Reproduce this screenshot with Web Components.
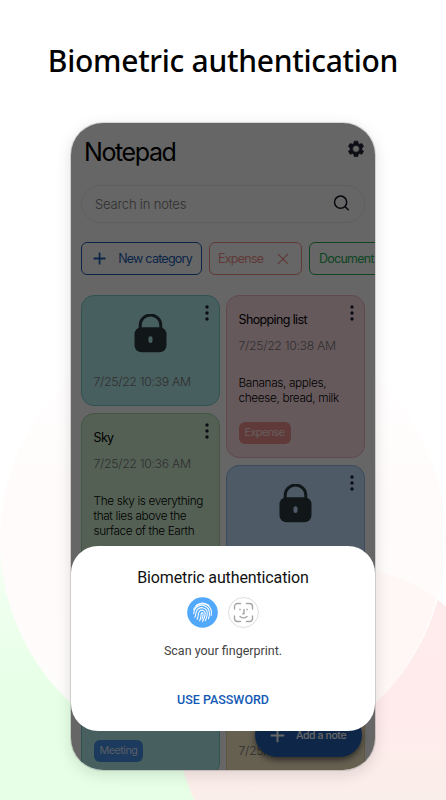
<!DOCTYPE html>
<html lang="en">
<head>
<meta charset="utf-8">
<title>Notepad</title>
<style>
	html,body{margin:0;width:446px;height:800px;overflow:hidden;background:#fff}
</style>
</head>
<body>
<promo-page headline="Biometric authentication">
	<phone-frame>
		<notes-header>Notepad</notes-header>
		<search-field>Search in notes</search-field>
		<category-bar>
			<category-chip icon="plus" style="--color:#1c5eb4">New category</category-chip>
			<category-chip icon="close" style="--color:#f08f8b">Expense</category-chip>
			<category-chip style="--color:#28ad55">Document</category-chip>
		</category-bar>
		<note-board>
			<note-card slot="left" locked date="7/25/22 10:39 AM" style="--fill:#b4eded;--edge:#78cdcb;--h:111px"></note-card>
			<note-card slot="left" name="Sky" date="7/25/22 10:36 AM" style="--fill:#d1f0d3;--edge:#a2d6a9;--h:218px">The sky is everything that lies above the surface of the Earth</note-card>
			<note-card slot="left" locked date="7/25/22 10:33 AM" tag="Meeting" style="--fill:#b4eded;--edge:#78cdcb;--tag:#4690ea;--h:138px"></note-card>
			<note-card slot="right" name="Shopping list" date="7/25/22 10:38 AM" tag="Expense" style="--fill:#ffdfe7;--edge:#f0b6c3;--tag:#f0918d;--h:163px">Bananas, apples, cheese, bread, milk</note-card>
			<note-card slot="right" locked date="7/25/22 10:35 AM" style="--fill:#c4e0ff;--edge:#93bdec;--h:192px"></note-card>
			<note-card slot="right" locked date="7/25/22 10:31 AM" style="--fill:#fff0cb;--edge:#eed9a5;--h:140px"></note-card>
		</note-board>
		<add-button slot="over">Add a note</add-button>
		<auth-dialog slot="dialog" heading="Biometric authentication" action="USE PASSWORD">Scan your fingerprint.</auth-dialog>
	</phone-frame>
</promo-page>
<script>
class UIElement extends HTMLElement {
	constructor(){
		super()
		const root = this.attachShadow({mode:"open"})
		root.innerHTML = `<style>*{box-sizing:border-box}:host{display:block;box-sizing:border-box}${this.constructor.css}</style>${this.html()}`
	}
	attr(name){
		return this.getAttribute(name)||""
	}
	html(){
		return "<slot></slot>"
	}
}
const ICONS = {
	plus:`<svg width="15" height="15" viewBox="0 0 15 15"><path d="M7.5 .7v13.6M.7 7.5h13.6" fill="none" stroke="currentColor" stroke-width="2"/></svg>`,
	close:`<svg width="12" height="12" viewBox="0 0 12 12"><path d="M.8.8l10.4 10.4M11.2.8L.8 11.2" fill="none" stroke="currentColor" stroke-width="1.2"/></svg>`,
	search:`<svg width="17" height="17" viewBox="0 0 17 17"><g fill="none" stroke="#10131f" stroke-width="1.5" stroke-linecap="round"><circle cx="7.6" cy="7.2" r="6.1"/><path d="M12.1 11.7l3.2 3"/></g></svg>`,
	gear:`<svg width="18" height="18" viewBox="0 0 24 24"><path fill="#242538" fill-rule="evenodd" d="M9.7 1.5h4.6l.7 3.1 1.8 1 3-1 2.3 4-2.3 2.1v2.2l2.3 2.1-2.3 4-3-1-1.8 1-.7 3.1H9.7L9 19l-1.8-1-3 1-2.3-4 2.3-2.1v-2.2L1.9 8.6l2.3-4 3 1 1.8-1zM12 7.2a4.6 4.6 0 100 9.2 4.6 4.6 0 000-9.2z" stroke="#242538" stroke-linejoin="round"/></svg>`,
	lock:`<svg width="33" height="39" viewBox="0 0 33 39"><path d="M6.2 16V11.3a10.3 10.3 0 0120.6 0V16" fill="none" stroke="#2b3a40" stroke-width="3"/><rect x=".5" y="13.2" width="32" height="25" rx="7" fill="#2b3a40"/><rect x="14.5" y="22.3" width="4" height="6.8" rx="2" fill="var(--fill)"/></svg>`,
	dots:`<svg width="4" height="16" viewBox="0 0 4 16"><g fill="#20203a"><circle cx="2" cy="2" r="1.7"/><circle cx="2" cy="8" r="1.7"/><circle cx="2" cy="14" r="1.7"/></g></svg>`,
	finger:`<svg width="31" height="31" viewBox="0 0 31 31"><circle cx="15.5" cy="15.5" r="15.3" fill="#52a9fc"/><g fill="none" stroke="#fff" stroke-width="1.05" stroke-linecap="round">
		<path d="M9 8.5Q15.5 3.7 22 8.5"/>
		<path d="M6.7 12.2C10.5 5 21 5.2 24 12.5C24.7 14.5 24.6 16.5 24.2 18.5"/>
		<path d="M6.7 16.7C7 9 14 7.2 18 9C22.5 11 23.4 16.5 21.5 21.7"/>
		<path d="M7.8 20.2C9.5 17.8 8 15.5 10.3 12.7C13 9.5 18 10.2 19.7 13.5C21 16.5 20 20 18.3 23.7"/>
		<path d="M10 22.3C12 19.5 10.5 17 12.3 14.5C14 12.2 17.3 13 18 15.5C18.5 18.3 17 22 15.5 24.6"/>
		<path d="M12.6 23.8C14.4 21 13.7 18.5 14.3 16.5C14.8 15 16.3 15.5 16.1 17.2C16 19 15.7 20.5 15 22"/>
	</g></svg>`,
	face:`<svg width="31" height="31" viewBox="0 0 31 31"><circle cx="15.5" cy="15.5" r="15" fill="#fff" stroke="#d9d9d9" stroke-width=".9"/><g fill="none" stroke="#a4a4a4" stroke-width="1.4" stroke-linecap="round">
		<path d="M6.5 12V9.5A3 3 0 019.5 6.5H12.5M18.5 6.5h3a3 3 0 013 3V12M24.5 19v2.5a3 3 0 01-3 3h-3M12.5 24.5h-3a3 3 0 01-3-3V19"/>
		<path d="M12 12.2v.5M19 12.2v.5M16 12.5v4.2h-1.2M12 19.5q3.5 2.8 7 0"/>
	</g></svg>`,
}

class PromoPage extends UIElement {
	static css = `
		:host{width:446px;height:800px;position:relative;display:flex;flex-direction:column;align-items:center;overflow:hidden}
		.bg{position:absolute;inset:0}
		h1{position:relative;margin:0;height:123px;font:500 30px/122px "Noto Sans","Open Sans",sans-serif;color:#000;white-space:nowrap;letter-spacing:-.28px}
		slot{position:relative}`
	html(){
		return `<svg class="bg" width="446" height="800" viewBox="0 0 446 800">
			<defs>
				<linearGradient id="g" x1="0" y1="530" x2="0" y2="690" gradientUnits="userSpaceOnUse"><stop stop-color="#fff"/><stop offset=".3" stop-color="#f1fff1"/><stop offset="1" stop-color="#e7ffe7"/></linearGradient>
				<linearGradient id="r" x1="0" y1="565" x2="0" y2="800" gradientUnits="userSpaceOnUse"><stop stop-color="#ffecec"/><stop offset=".6" stop-color="#ffebeb"/><stop offset="1" stop-color="#faeeea"/></linearGradient>
				<linearGradient id="c" x1="0" y1="317" x2="0" y2="763" gradientUnits="userSpaceOnUse"><stop stop-color="#fff"/><stop offset=".4" stop-color="#fffbfb"/><stop offset="1" stop-color="#fffcfc"/></linearGradient>
			</defs>
			<path d="M0 530H223V800H0z" fill="url(#g)"/>
			<circle cx="340" cy="729" r="162" fill="url(#r)"/>
			<circle cx="223" cy="540" r="223" fill="url(#c)"/>
			<path d="M376 571A162 162 0 01436 598A223 223 0 01376 702z" fill="#fff6f6"/>
		</svg><h1>${this.attr("headline")}</h1><slot></slot>`
	}
}
class PhoneFrame extends UIElement {
	static css = `
		:host{position:relative;width:304px;height:647px;border-radius:32px;background:#fff;overflow:hidden;font-family:Inter,"Liberation Sans",sans-serif;box-shadow:0 0 0 1px #0002,0 4px 16px #0002}
		.app{display:flex;flex-direction:column;height:100%;padding:0 10px}
		.over{position:absolute;right:13px;bottom:13px}
		.scrim{position:absolute;inset:0;background:#0009}
		.dialog{position:absolute;left:0;right:0;top:423px}`
	html(){
		return `<div class="app"><slot></slot></div><div class="over"><slot name="over"></slot></div><div class="scrim"></div><div class="dialog"><slot name="dialog"></slot></div>`
	}
}
class NotesHeader extends UIElement {
	static css = `
		:host{display:flex;flex:none;justify-content:space-between;align-items:center;height:57px;margin-bottom:5px;padding:0 0 0 3px;font-size:25px;color:#000;letter-spacing:-1.4px}
		svg{display:block;margin-top:-5px}`
	html(){
		return `<slot></slot>${ICONS.gear}`
	}
}
class SearchField extends UIElement {
	static css = `
		:host{display:flex;flex:none;justify-content:space-between;align-items:center;height:38px;padding:0 14px 1px 13px;border:1px solid #ededed;border-radius:19px;font-size:13px;font-weight:300;color:#777;letter-spacing:-.17px}`
	html(){
		return `<slot></slot>${ICONS.search}`
	}
}
class CategoryBar extends UIElement {
	static css = `:host{display:flex;flex:none;gap:7px;margin:19px -10px 20px 0;height:33px;overflow:hidden}`
}
class CategoryChip extends UIElement {
	static css = `
		:host{display:flex;flex:none;align-items:center;gap:12px;padding:0 9px;border:1px solid var(--color);border-radius:6px;color:var(--color);font-size:12.5px;white-space:nowrap;letter-spacing:-.75px}
		:host([icon=plus]){width:121px;padding:0 9px 0 11px}
		:host([icon=close]){width:93px;padding:0 12px 0 8px;justify-content:space-between}`
	html(){
		const icon = this.attr("icon")
		if(icon == "plus")return `${ICONS.plus}<slot></slot>`
		return `<slot></slot>${ICONS[icon]||""}`
	}
}
class NoteBoard extends UIElement {
	static css = `
		:host{display:grid;grid-template-columns:139px 139px;gap:6px;align-items:start}
		div{display:flex;flex-direction:column;gap:7px}`
	html(){
		return `<div><slot name="left"></slot></div><div><slot name="right"></slot></div>`
	}
}
class NoteCard extends UIElement {
	static css = `
		:host{position:relative;display:flex;flex-direction:column;height:var(--h);padding:0 11.5px 13px;border:1px solid var(--edge);border-radius:13px;background:var(--fill);color:#000}
		.dots{position:absolute;right:10.5px;top:8.5px;line-height:0}
		.lock{align-self:center;height:39px;margin-top:17.5px}
		.name{margin-top:16px;font-size:12.5px;line-height:16px;letter-spacing:-.63px}
		.date{margin-top:10px;font-size:12.3px;line-height:16px;font-weight:300;color:#777;white-space:nowrap;letter-spacing:-.33px}
		.lock + .date{margin-top:21.5px}
		.body{margin-top:22px;font-size:11.8px;line-height:15px;font-weight:300;letter-spacing:-.36px}
		.tag{align-self:flex-start;margin-top:auto;padding:0 6px;border-radius:6px;background:var(--tag);color:#fffc;font-size:10.8px;line-height:22px;font-weight:400;letter-spacing:-.52px}`
	html(){
		const top = this.hasAttribute("locked")?`<div class="lock">${ICONS.lock}</div>`:`<div class="name">${this.attr("name")}</div>`
		const body = this.hasAttribute("locked")?"":`<div class="body"><slot></slot></div>`
		const tag = this.hasAttribute("tag")?`<div class="tag">${this.attr("tag")}</div>`:""
		return `<div class="dots">${ICONS.dots}</div>${top}<div class="date">${this.attr("date")}</div>${body}${tag}`
	}
}
class AddButton extends UIElement {
	static css = `
		:host{display:flex;align-items:center;gap:11px;width:107px;height:44px;padding:0 15px;border-radius:22px;background:#2562b6;color:#fff;font-size:10.5px;font-weight:500;white-space:nowrap;letter-spacing:-.4px;box-shadow:0 3px 6px #0008}`
	html(){
		return `${ICONS.plus}<slot></slot>`
	}
}
class AuthDialog extends UIElement {
	static css = `
		:host{display:flex;flex-direction:column;align-items:center;height:185px;border-radius:27px;background:#fff;font-family:Roboto,sans-serif}
		h2{margin:22px 0 0;font-size:16px;line-height:19px;font-weight:400;color:#111;letter-spacing:-.13px}
		.icons{display:flex;gap:10px;margin-top:10px;height:31px}
		p{margin:15px 0 0;font-size:12.5px;line-height:16px;color:#444}
		b{margin-top:33px;font-size:12.5px;line-height:16px;font-weight:500;color:#1259b5}`
	html(){
		return `<h2>${this.attr("heading")}</h2><div class="icons">${ICONS.finger}${ICONS.face}</div><p><slot></slot></p><b>${this.attr("action")}</b>`
	}
}

customElements.define("promo-page", PromoPage);
customElements.define("phone-frame", PhoneFrame);
customElements.define("notes-header", NotesHeader);
customElements.define("search-field", SearchField);
customElements.define("category-bar", CategoryBar);
customElements.define("category-chip", CategoryChip);
customElements.define("note-board", NoteBoard);
customElements.define("note-card", NoteCard);
customElements.define("add-button", AddButton);
customElements.define("auth-dialog", AuthDialog);
</script>
</body>
</html>
